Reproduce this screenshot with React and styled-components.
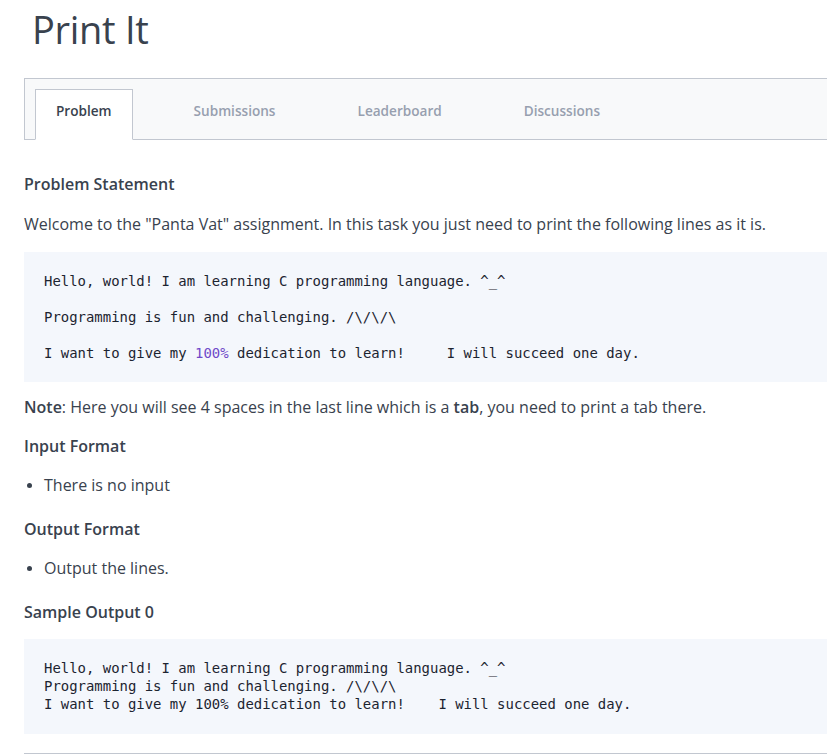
import React from "react";
import styled, { createGlobalStyle } from "styled-components";

const Global = createGlobalStyle`
  html, body { margin: 0; padding: 0; overflow: hidden; background: #fff; }
  body { font-family: "Open Sans", "Noto Sans", sans-serif; color: #39424e; }
`;

const Page = styled.div`
  width: 860px;
  padding-left: 24px;
  box-sizing: border-box;
`;

const Title = styled.h1`
  margin: 3px 0 0 8px;
  font-size: 38px;
  line-height: 52px;
  letter-spacing: -0.3px;
  font-weight: 400;
  color: #39424e;
`;

const TabBar = styled.nav`
  margin-top: 23px;
  height: 60px;
  border: 1px solid #c2c7d0;
  border-right: none;
  background: #f8f9fa;
  display: flex;
  align-items: flex-end;
  padding-left: 10px;
  gap: 40px;
`;

const Tab = styled.div`
  height: 51px;
  margin-bottom: -1px;
  padding: 0 20px 8px;
  box-sizing: border-box;
  display: flex;
  align-items: center;
  justify-content: center;
  font-size: 13.6px;
  font-weight: 600;
  color: ${(p) => (p.$active ? "#39424e" : "#979faf")};
  background: ${(p) => (p.$active ? "#fff" : "transparent")};
  border: 1px solid ${(p) => (p.$active ? "#c2c7d0" : "transparent")};
  border-bottom: 1px solid ${(p) => (p.$active ? "#fff" : "transparent")};
`;

const Content = styled.div`
  padding-top: 32px;
`;

const Heading = styled.h3`
  margin: ${(p) => p.$mt || 0}px 0 0;
  font-size: 16px;
  line-height: 24px;
  font-weight: 600;
  color: #39424e;
`;

const Para = styled.p`
  margin: ${(p) => p.$mt || 0}px 0 0;
  font-size: 16px;
  line-height: 24px;
  color: #39424e;
`;

const Strong = styled.strong`
  font-weight: 600;
`;

const List = styled.ul`
  margin: ${(p) => p.$mt || 0}px 0 0;
  padding: 0;
  list-style: none;
`;

const Item = styled.li`
  position: relative;
  padding-left: 20px;
  font-size: 16px;
  line-height: 24px;
  color: #39424e;
  &::before {
    content: "";
    position: absolute;
    left: 3px;
    top: 10px;
    width: 5px;
    height: 5px;
    border-radius: 50%;
    background: #39424e;
  }
`;

const Code = styled.pre`
  margin: ${(p) => p.$mt || 0}px 0 0;
  padding: ${(p) => (p.$spaced ? "11px 20px" : "20px 20px 21px")};
  background: #f4f7fc;
  font-family: "DejaVu Sans Mono", "Liberation Mono", monospace;
  font-size: 13.95px;
  line-height: ${(p) => (p.$spaced ? "36px" : "18px")};
  color: #1c2430;
  tab-size: 8;
  white-space: pre;
`;

const Num = styled.span`
  color: #6f49c9;
`;

const Rule = styled.hr`
  margin: 19px 0 0;
  border: none;
  border-top: 1px solid #c2c7d0;
`;

export default function App() {
  return (
    <>
      <Global />
      <Page>
        <Title>Print It</Title>
        <TabBar>
          <Tab $active>Problem</Tab>
          <Tab>Submissions</Tab>
          <Tab>Leaderboard</Tab>
          <Tab>Discussions</Tab>
        </TabBar>
        <Content>
          <Heading>Problem Statement</Heading>
          <Para $mt={16}>
            Welcome to the "Panta Vat" assignment. In this task you just need to print the following lines as it is.
          </Para>
          <Code $mt={16} $spaced>
            {"Hello, world! I am learning C programming language. ^_^\nProgramming is fun and challenging. /\\/\\/\\\nI want to give my "}
            <Num>100%</Num>
            {" dedication to learn!\tI will succeed one day."}
          </Code>
          <Para $mt={13}>
            <Strong>Note</Strong>: Here you will see 4 spaces in the last line which is a <Strong>tab</Strong>, you
            need to print a tab there.
          </Para>
          <Heading $mt={15}>Input Format</Heading>
          <List $mt={15}>
            <Item>There is no input</Item>
          </List>
          <Heading $mt={20}>Output Format</Heading>
          <List $mt={15}>
            <Item>Output the lines.</Item>
          </List>
          <Heading $mt={20}>Sample Output 0</Heading>
          <Code $mt={15}>
            {"Hello, world! I am learning C programming language. ^_^\nProgramming is fun and challenging. /\\/\\/\\\nI want to give my 100% dedication to learn!    I will succeed one day."}
          </Code>
          <Rule />
        </Content>
      </Page>
    </>
  );
}
